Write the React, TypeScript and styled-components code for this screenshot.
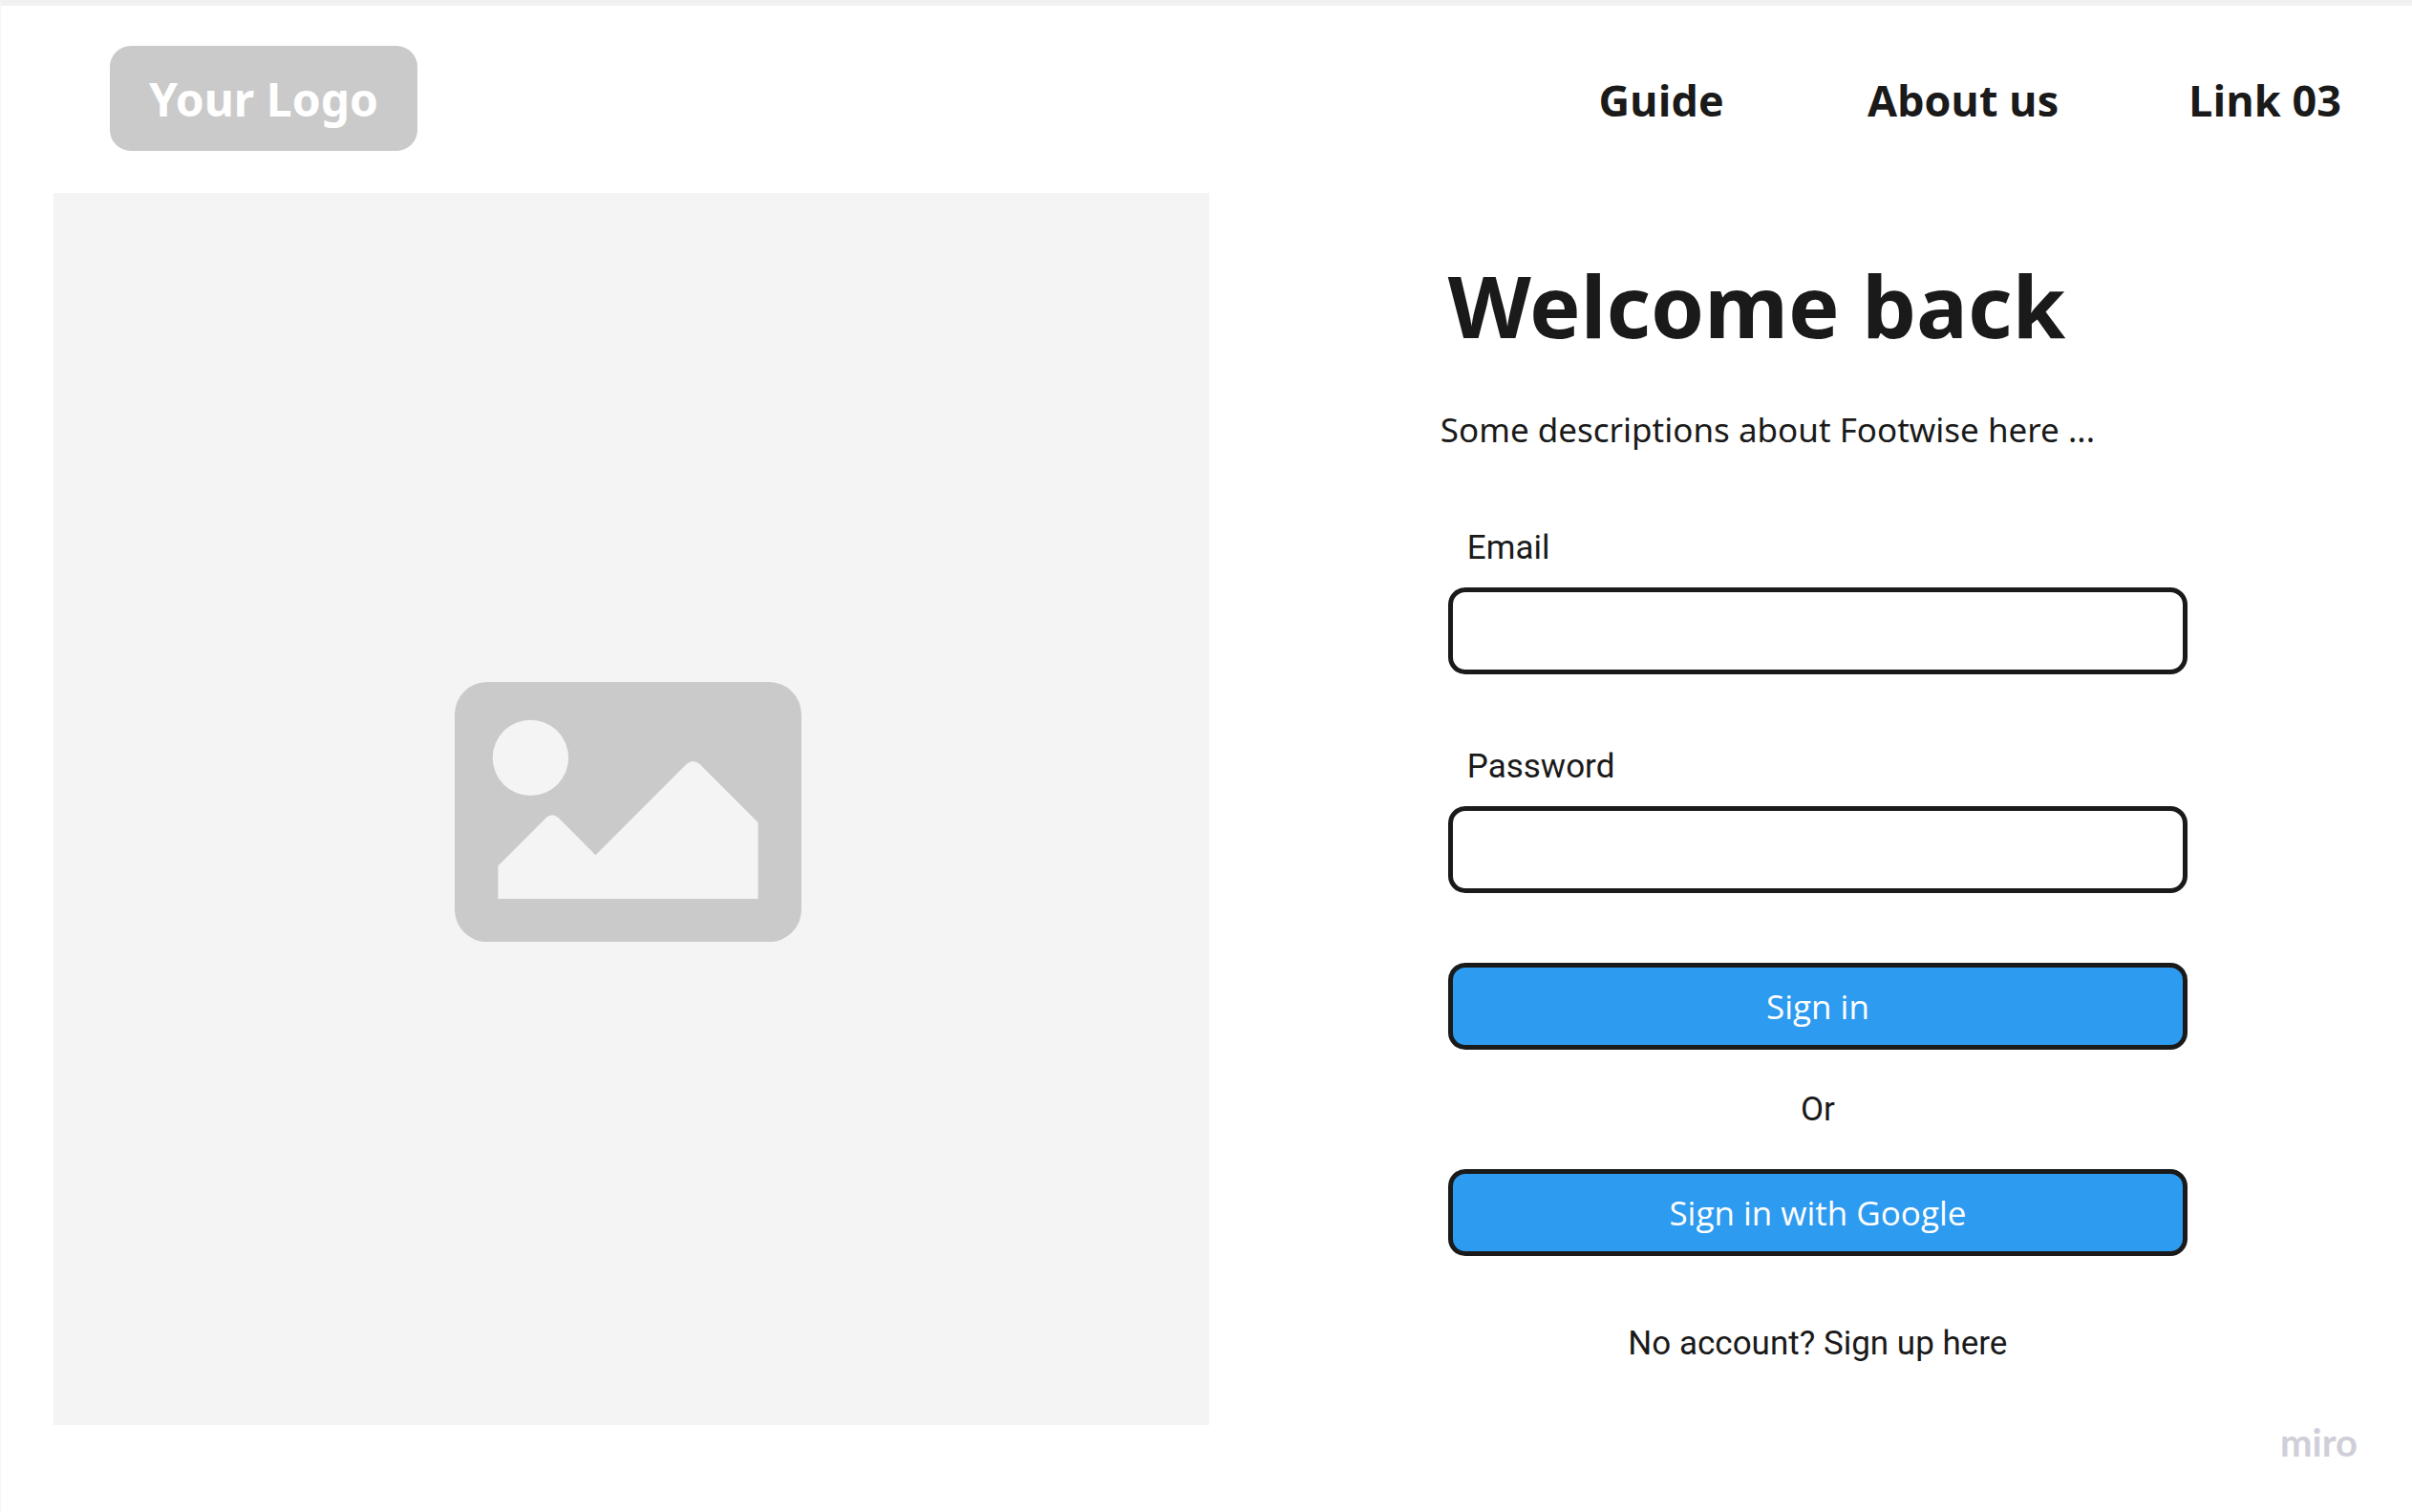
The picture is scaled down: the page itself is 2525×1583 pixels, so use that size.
import React from "react";
import styled, { createGlobalStyle } from "styled-components";

const ink = "#1a1a1a";
const placeholder = "#cacaca";
const panel = "#f4f4f4";
const blue = "#2d9bf0";
const noto = `"Noto Sans", "Open Sans", sans-serif`;
const open = `"Open Sans", "Noto Sans", sans-serif`;
const roboto = `Roboto, "Liberation Sans", sans-serif`;

const GlobalStyle = createGlobalStyle`
  *, *::before, *::after { box-sizing: border-box; }
  body { margin: 0; background: #fff; color: ${ink}; }
`;

const Page = styled.div`
  display: flex;
  flex-direction: column;
  min-height: 100vh;
  border-top: 6px solid #f1f1f1;
  border-left: 1px solid #f5f5f5;
`;

const Header = styled.header`
  display: flex;
  justify-content: space-between;
  align-items: baseline;
  padding: 42px 34px 44px 114px;
`;

const Logo = styled.a`
  display: flex;
  align-items: center;
  justify-content: center;
  width: 322px;
  height: 110px;
  border-radius: 22px;
  background: ${placeholder};
  color: #fff;
  font: 700 48px ${noto};
  text-decoration: none;
`;

const Nav = styled.nav`
  display: grid;
  grid-template-columns: repeat(3, 240px);
  column-gap: 76px;
`;

const NavLink = styled.a`
  color: ${ink};
  font: 700 45px ${open};
  text-align: center;
  text-decoration: none;
  white-space: nowrap;
`;

const Main = styled.main`
  display: flex;
  flex: 1;
  padding-left: 55px;
`;

const ImagePanel = styled.div`
  display: flex;
  align-items: center;
  justify-content: center;
  flex: 0 0 49%;
  padding: 6px 6px 0 0;
  background: ${panel};
`;

const Picture = styled.svg`
  width: 363px;
  max-width: 60%;
  height: auto;
`;

const Content = styled.section`
  flex: 1;
  min-width: 0;
  padding: 57px 235px 0 242px;
`;

const Title = styled.h1`
  margin: 0 0 47px;
  padding-left: 8px;
  font: 700 90px/120px ${noto};
  white-space: nowrap;
`;

const Description = styled.p`
  margin: 0 0 76px;
  font: 400 35px/48px ${noto};
`;

const Form = styled.form`
  display: flex;
  flex-direction: column;
  padding-left: 8px;
`;

const Field = styled.div`
  display: flex;
  flex-direction: column;
  gap: 17px;
  margin-bottom: 73px;
`;

const Label = styled.label`
  padding-left: 20px;
  font: 400 35px/48px ${roboto};
`;

const Input = styled.input`
  width: 100%;
  height: 91px;
  padding: 0 20px;
  border: 5px solid ${ink};
  border-radius: 18px;
  background: #fff;
  color: ${ink};
  font: 400 35px/48px ${roboto};
`;

const Button = styled.button`
  width: 100%;
  height: 91px;
  padding: 0;
  border: 5px solid ${ink};
  border-radius: 18px;
  background: ${blue};
  color: #fff;
  font: 400 35px/48px ${open};
  cursor: pointer;
`;

const Divider = styled.p`
  margin: 39px 0 38px;
  font: 400 35px/48px ${roboto};
  text-align: center;
`;

const SignUp = styled.a`
  align-self: center;
  margin-top: 68px;
  color: ${ink};
  font: 400 35px/48px ${roboto};
  text-decoration: none;
`;

const Footer = styled.footer`
  display: flex;
  justify-content: flex-end;
  height: 91px;
  padding-right: 57px;
`;

const Brand = styled.span`
  color: #d0cfd9;
  font: 700 40px/36px Lato, "Open Sans", sans-serif;
`;

const links = ["Guide", "About us", "Link 03"];

export default function App() {
  return (
    <Page>
      <GlobalStyle />
      <Header>
        <Logo href="#">Your Logo</Logo>
        <Nav>
          {links.map((text) => (
            <NavLink key={text} href="#">
              {text}
            </NavLink>
          ))}
        </Nav>
      </Header>
      <Main>
        <ImagePanel>
          <Picture viewBox="0 0 1088 816" aria-hidden="true">
            <rect width="1088" height="816" rx="102" fill={placeholder} />
            <circle cx="238" cy="238" r="119" fill={panel} />
            <path
              d="M136 577 L288 425 Q306 410 324 425 L442 543 L728 257 Q748 240 768 257 L952 441 V680 H136 Z"
              fill={panel}
            />
          </Picture>
        </ImagePanel>
        <Content>
          <Title>Welcome back</Title>
          <Description>Some descriptions about Footwise here ...</Description>
          <Form onSubmit={(e) => e.preventDefault()}>
            <Field>
              <Label htmlFor="email">Email</Label>
              <Input id="email" type="email" />
            </Field>
            <Field>
              <Label htmlFor="password">Password</Label>
              <Input id="password" type="password" />
            </Field>
            <Button type="submit">Sign in</Button>
            <Divider>Or</Divider>
            <Button type="button">Sign in with Google</Button>
            <SignUp href="#">No account? Sign up here</SignUp>
          </Form>
        </Content>
      </Main>
      <Footer>
        <Brand>miro</Brand>
      </Footer>
    </Page>
  );
}
